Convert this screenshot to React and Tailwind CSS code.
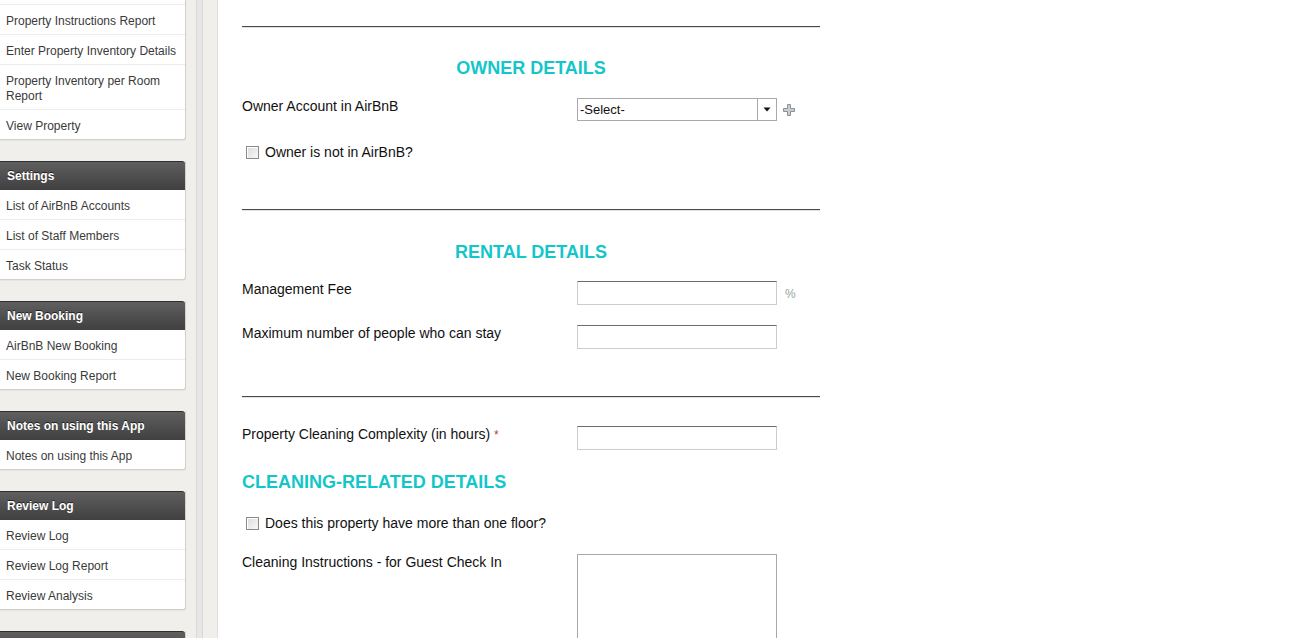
import React from 'react';

const menus = [
  {
    title: null,
    items: ['Property Instructions Report', 'Enter Property Inventory Details', 'Property Inventory per Room Report', 'View Property'],
  },
  { title: 'Settings', items: ['List of AirBnB Accounts', 'List of Staff Members', 'Task Status'] },
  { title: 'New Booking', items: ['AirBnB New Booking', 'New Booking Report'] },
  { title: 'Notes on using this App', items: ['Notes on using this App'] },
  { title: 'Review Log', items: ['Review Log', 'Review Log Report', 'Review Analysis'] },
  { title: '', items: [] },
];

const MenuPanel = ({ title, items }) => (
  <div className="w-[186px] bg-white border-r border-b border-[#d3d0ca] rounded-br-[3px] shadow-[0_1px_1px_rgba(0,0,0,0.05)] mb-[21px] shrink-0">
    {title !== null ? (
      <div className="h-[29px] flex items-center px-[7px] border-t border-[#2f2f2f] bg-gradient-to-b from-[#5f5f5f] to-[#404040] text-white font-bold text-[12px] [text-shadow:0_-1px_0_#222] rounded-tr-[3px]">
        {title}
      </div>
    ) : (
      <div className="h-[5px] border-b border-[#ececec]" />
    )}
    {items.map((item, i) => (
      <div
        key={item}
        className={`px-[6px] pt-[9px] pb-[5px] leading-[15px] text-[12px] text-[#3a3a3a] ${
          i < items.length - 1 ? 'border-b border-[#ececec]' : ''
        }`}
      >
        {item === 'Property Inventory per Room Report' ? (
          <>
            Property Inventory per Room
            <br />
            Report
          </>
        ) : (
          item
        )}
      </div>
    ))}
  </div>
);

const Checkbox = () => (
  <span className="inline-block w-[13px] h-[13px] border border-[#8a8a8a] bg-gradient-to-br from-[#dcdcdc] to-[#f8f8f8] shadow-[inset_1px_1px_0_#fff]" />
);

const TextInput = () => (
  <div className="w-[200px] h-[24px] bg-white border border-[#cccccc] border-t-[#6c6c6c]" />
);

const Divider = ({ className }) => (
  <div className={`h-[2px] border-t border-[#4a4a4a] border-b border-b-[#e2e2e2] ${className}`} />
);

const Row = ({ label, children, className }) => (
  <div className={`flex items-start ${className}`}>
    <div className="w-[335px] leading-[16px] text-[14px] text-[#111]">{label}</div>
    {children}
  </div>
);

const CheckRow = ({ label, className }) => (
  <div className={`h-[20px] flex items-center pl-[4px] gap-[6px] text-[14px] text-[#111] ${className}`}>
    <Checkbox />
    <span>{label}</span>
  </div>
);

const Heading = ({ children, className }) => (
  <div className={`h-[20px] leading-[20px] font-bold text-[18px] text-[#13c6c9] ${className}`}>
    {children}
  </div>
);

export default function App() {
  return (
    <div
      className="flex h-[638px] w-full overflow-hidden bg-white"
      style={{ fontFamily: '"Liberation Sans", Arial, sans-serif' }}
    >
      <div className="w-[218px] shrink-0 flex bg-[#f1efeb]">
        <div className="w-[186px] flex flex-col">
          {menus.map((m, i) => (
            <MenuPanel key={i} title={m.title} items={m.items} />
          ))}
        </div>
        <div className="w-[10px]" />
        <div className="w-[7px] bg-[#e7e7e7] border-x border-[#dad9d6]" />
        <div className="flex-1 border-r border-[#e2dfd9]" />
      </div>

      <div className="flex-1 pl-[24px]">
        <div className="w-[578px] flex flex-col">
          <Divider className="mt-[26px]" />
          <Heading className="mt-[30px] text-center">OWNER DETAILS</Heading>
          <Row label="Owner Account in AirBnB" className="mt-[20px]">
            <div className="flex items-center">
              <div className="w-[200px] h-[23px] flex border border-[#a9a9a9] bg-white text-[13px] text-[#111]">
                <div className="flex-1 flex items-center pl-[2px]">-Select-</div>
                <div className="w-[19px] border-l border-[#a9a9a9] flex items-center justify-center">
                  <svg width="8" height="5" viewBox="0 0 8 5">
                    <path d="M0.5 0.5 L7.5 0.5 L4 4.5 Z" fill="#111" />
                  </svg>
                </div>
              </div>
              <svg className="ml-[6px]" width="12" height="12" viewBox="0 0 12 12">
                <path
                  d="M4.5 0.5 H7.5 V4.5 H11.5 V7.5 H7.5 V11.5 H4.5 V7.5 H0.5 V4.5 H4.5 Z"
                  fill="#c9ccd0"
                  stroke="#8c9096"
                  strokeWidth="1"
                />
              </svg>
            </div>
          </Row>
          <CheckRow label="Owner is not in AirBnB?" className="mt-[21px]" />

          <Divider className="mt-[47px]" />
          <Heading className="mt-[31px] text-center">RENTAL DETAILS</Heading>
          <Row label="Management Fee" className="mt-[19px]">
            <div className="flex items-center">
              <TextInput />
              <span className="ml-[8px] mt-[2px] text-[12px] text-[#9aa59a]">%</span>
            </div>
          </Row>
          <Row label="Maximum number of people who can stay" className="mt-[20px]">
            <TextInput />
          </Row>

          <Divider className="mt-[47px]" />
          <Row
            label={
              <>
                Property Cleaning Complexity (in hours) <span className="text-[12px] text-[#b5443c]">*</span>
              </>
            }
            className="mt-[28px]"
          >
            <TextInput />
          </Row>
          <Heading className="mt-[22px]">CLEANING-RELATED DETAILS</Heading>
          <CheckRow label="Does this property have more than one floor?" className="mt-[21px]" />
          <Row label="Cleaning Instructions - for Guest Check In" className="mt-[21px]">
            <div className="w-[200px] h-[110px] bg-white border border-[#a9a9a9]" />
          </Row>
        </div>
      </div>
    </div>
  );
}
